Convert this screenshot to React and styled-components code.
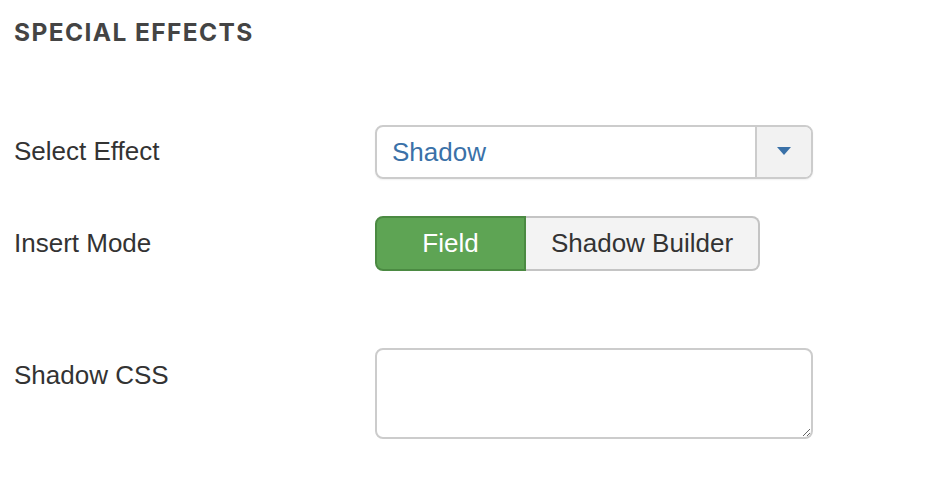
import React from 'react'
import styled, {createGlobalStyle} from 'styled-components'

const Global = createGlobalStyle`
    html, body {
        margin: 0;
        padding: 0;
        background: #fff;
    }
    body {
        font-family: "Liberation Sans", Arial, sans-serif;
        color: #333;
    }
`

const Page = styled.div`
    padding: 0 14px;
    width: 912px;
`

const Heading = styled.h3`
    margin: 0;
    padding-top: 18px;
    height: 107px;
    box-sizing: border-box;
    font-family: Inter, "Open Sans", sans-serif;
    font-weight: 700;
    font-size: 24.5px;
    line-height: 28px;
    color: #444;
    letter-spacing: 1.4px;
`

const Row = styled.div`
    display: grid;
    grid-template-columns: 361px 438px;
    align-items: start;
    margin-top: ${p => p.gap || 0}px;
`

const Label = styled.label`
    font-size: 26px;
    line-height: ${p => p.lh || 54}px;
    color: #333;
`

const Select = styled.div`
    display: flex;
    height: 54px;
    box-sizing: border-box;
    border: 2px solid #ccc;
    border-radius: 8px;
    overflow: hidden;
    box-shadow: 0 1px 2px rgba(0, 0, 0, 0.06);
`

const SelectValue = styled.div`
    flex: 1;
    padding-left: 15px;
    font-size: 26px;
    line-height: 50px;
    color: #3a71a8;
`

const SelectToggle = styled.div`
    width: 54px;
    background: #f2f2f2;
    border-left: 2px solid #ccc;
    display: flex;
    align-items: center;
    justify-content: center;
`

const Caret = styled.span`
    width: 0;
    height: 0;
    border-left: 7px solid transparent;
    border-right: 7px solid transparent;
    border-top: 8px solid #3a71a8;
    margin-top: -2px;
`

const Group = styled.div`
    display: flex;
    height: 55px;
`

const Toggle = styled.button`
    box-sizing: border-box;
    height: 55px;
    width: ${p => p.w}px;
    font-family: "Liberation Sans", Arial, sans-serif;
    font-size: 26px;
    padding: 0;
    cursor: pointer;
    color: ${p => (p.active ? '#fff' : '#333')};
    background: ${p => (p.active ? '#5ea454' : '#f3f3f3')};
    border: 2px solid ${p => (p.active ? '#4b8a42' : '#c4c4c4')};
    border-radius: ${p => (p.first ? '8px 0 0 8px' : '0 8px 8px 0')};
    ${p => (p.first ? '' : 'border-left: none;')}
`

const TextArea = styled.textarea`
    box-sizing: border-box;
    width: 438px;
    height: 91px;
    border: 2px solid #ccc;
    border-radius: 8px;
    font-family: "Liberation Sans", Arial, sans-serif;
    font-size: 26px;
    padding: 8px 14px;
    outline: none;
    resize: vertical;
`

export default function App() {
    return (
        <Page>
            <Global />
            <Heading>SPECIAL EFFECTS</Heading>
            <Row gap={18}>
                <Label lh={52}>Select Effect</Label>
                <Select>
                    <SelectValue>Shadow</SelectValue>
                    <SelectToggle>
                        <Caret />
                    </SelectToggle>
                </Select>
            </Row>
            <Row gap={37}>
                <Label>Insert Mode</Label>
                <Group>
                    <Toggle first active w={151}>Field</Toggle>
                    <Toggle w={234}>Shadow Builder</Toggle>
                </Group>
            </Row>
            <Row gap={77}>
                <Label lh={55}>Shadow CSS</Label>
                <TextArea />
            </Row>
        </Page>
    )
}
